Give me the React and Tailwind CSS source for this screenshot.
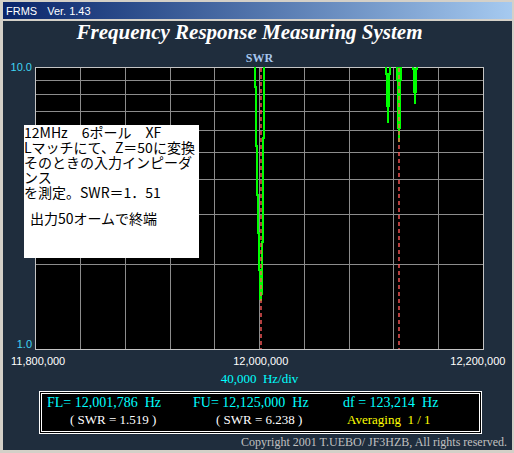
import React from "react";

const W = 449;
const H = 283;
const vx = [45, 90, 135, 179, 224, 269, 314, 358, 403];
const hy = [13, 27, 44, 63, 85, 112, 147, 197];

const P = (pts) => pts.map(([x, y], i) => `${i ? "L" : "M"}${x - 35} ${y - 67}`).join(" ");

const traces = [
  P([[255, 67], [255, 87], [256, 87], [256, 146], [257, 146], [257, 195], [258, 195], [258, 233], [259, 233], [259, 270], [260, 270], [260, 299], [261, 301]]),
  P([[264, 67], [264, 138], [263, 138], [263, 242], [262, 242], [262, 290], [261, 301]]),
  P([[386, 67], [386, 74], [387, 74], [387, 106], [388, 106], [388, 123]]),
  P([[390, 67], [390, 74], [389, 74], [389, 106], [388, 106]]),
  P([[397, 67], [397, 80], [398, 80], [398, 128], [399, 128]]),
  P([[401, 67], [401, 80], [400, 80], [400, 128], [399, 128]]),
  P([[399, 67], [399, 142]]),
  P([[413, 67], [413, 69], [414, 69], [414, 92], [415, 92], [415, 104]]),
  P([[417, 67], [417, 69], [416, 69], [416, 92], [415, 92]]),
];

function Plot() {
  return (
    <svg width={W} height={H} viewBox={`0 0 ${W} ${H}`} className="block shrink-0">
      <rect x="0" y="0" width={W} height={H} fill="#000" />
      {vx.map((x) => (
        <line key={"v" + x} x1={x + 0.5} y1="0" x2={x + 0.5} y2={H} stroke="#8c8c8c" strokeWidth="1" />
      ))}
      {hy.map((y) => (
        <line key={"h" + y} x1="0" y1={y + 0.5} x2={W} y2={y + 0.5} stroke="#8c8c8c" strokeWidth="1" />
      ))}
      <rect x="0.5" y="0.5" width={W - 1} height={H - 1} fill="none" stroke="#c4c4c4" strokeWidth="1" />
      {traces.map((d, i) => (
        <path key={i} d={d} fill="none" stroke="#00ff00" strokeWidth="2" shapeRendering="crispEdges" />
      ))}
      <line x1="226" y1="1" x2="226" y2={H - 1} stroke="#ff5a5a" strokeWidth="1.4" strokeDasharray="4 3" />
      <line x1="364" y1="1" x2="364" y2={H - 1} stroke="#ff5a5a" strokeWidth="1.4" strokeDasharray="4 3" />
    </svg>
  );
}

const sans = { fontFamily: '"Liberation Sans", Arial, sans-serif' };
const serif = { fontFamily: '"Liberation Serif", "Times New Roman", serif' };
const jp = { fontFamily: '"Noto Sans CJK JP", "Noto Sans", sans-serif' };

export default function App() {
  return (
    <div className="w-[514px] h-[453px] bg-[#d4d0c8] pt-[2px] pl-[3px] pr-[2px] pb-[3px] flex flex-col overflow-hidden">
      <div
        className="h-[17px] shrink-0 bg-gradient-to-r from-[#0a246a] to-[#a6caf0] text-white text-[11px] leading-[17px] pl-[3px] pt-[1px] whitespace-pre"
        style={sans}
      >
        <span>FRMS</span>
        <span className="ml-[10px]">Ver. 1.43</span>
      </div>
      <div className="h-[2px] shrink-0" />
      <div className="flex-1 bg-[#1f2d3d] flex flex-col relative">
        <div
          className="mt-[1px] pr-[16px] text-center text-white text-[21px] leading-[21px] font-bold italic"
          style={serif}
        >
          Frequency Response Measuring System
        </div>
        <div
          className="mt-[9px] pl-[4px] text-center text-[#a6c6ee] text-[12px] leading-[12px] font-bold"
          style={serif}
        >
          SWR
        </div>
        <div className="mt-[3px] flex relative">
          <div
            className="w-[32px] h-[283px] flex flex-col justify-between items-end pr-[3px] text-[#3fd4f4] text-[11px] leading-[11px]"
            style={sans}
          >
            <span className="-mt-[5px]">10.0</span>
            <span>1.0</span>
          </div>
          <Plot />
          <div
            className="absolute left-[21px] top-[58px] w-[175px] h-[133px] bg-white text-black text-[14px] leading-[15px] whitespace-pre"
            style={jp}
          >
            <div>12MHz　6ポール　XF</div>
            <div>Lマッチにて、Z＝50に変換</div>
            <div>そのときの入力インピーダ</div>
            <div>ンス</div>
            <div>を測定。SWR＝1．51</div>
            <div className="mt-[11px] pl-[6px]">出力50オームで終端</div>
          </div>
        </div>
        <div className="mt-[6px] flex text-white text-[11px] leading-[11px] whitespace-pre" style={sans}>
          <span className="ml-[8px]">11,800,000</span>
          <span className="ml-[168px]">12,000,000</span>
          <span className="ml-[162px]">12,200,000</span>
        </div>
        <div className="mt-[5px] pl-[4px] text-center text-[#00ffff] text-[13px] leading-[13px] whitespace-pre" style={serif}>
          40,000  Hz/div
        </div>
        <div className="mt-[6px] ml-[36px] w-[443px] h-[43px] border border-white bg-black p-[1px]">
          <div className="w-full h-full border border-white bg-black whitespace-pre" style={serif}>
            <div className="grid grid-cols-[146px_150px_1fr] pl-[5px] pt-[2px] text-[#00ffff] text-[14px] leading-[14px]">
              <span>FL= 12,001,786  Hz</span>
              <span>FU= 12,125,000  Hz</span>
              <span>df = 123,214  Hz</span>
            </div>
            <div className="grid grid-cols-[146px_150px_1fr] pl-[5px] mt-[3px] text-[13px] leading-[13px]">
              <span className="pl-[23px] text-white">( SWR = 1.519 )</span>
              <span className="pl-[23px] text-white">( SWR = 6.238 )</span>
              <span className="pl-[4px] text-[#ffff00]">Averaging  1 / 1</span>
            </div>
          </div>
        </div>
        <div className="mt-[2px] pr-[5px] text-right text-[#c0c0c0] text-[12px] leading-[12px]" style={serif}>
          Copyright 2001 T.UEBO/ JF3HZB, All rights reserved.
        </div>
      </div>
    </div>
  );
}
